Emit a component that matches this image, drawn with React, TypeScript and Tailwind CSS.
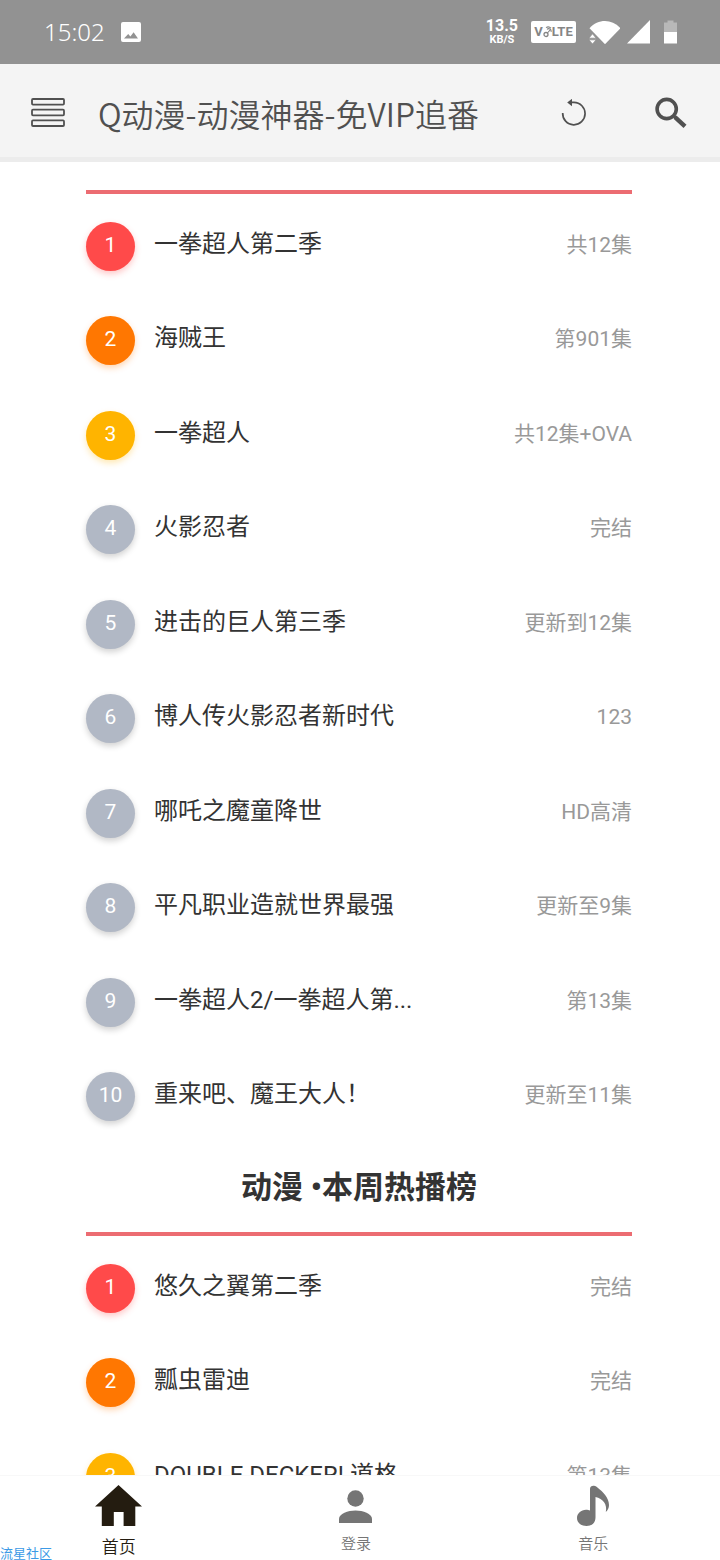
// src/App.tsx
import type { ReactNode } from "react";

interface Show {
  title: string;
  episode: string;
}

const topShows: Show[] = [
  { title: "一拳超人第二季", episode: "共12集" },
  { title: "海贼王", episode: "第901集" },
  { title: "一拳超人", episode: "共12集+OVA" },
  { title: "火影忍者", episode: "完结" },
  { title: "进击的巨人第三季", episode: "更新到12集" },
  { title: "博人传火影忍者新时代", episode: "123" },
  { title: "哪吒之魔童降世", episode: "HD高清" },
  { title: "平凡职业造就世界最强", episode: "更新至9集" },
  { title: "一拳超人2/一拳超人第...", episode: "第13集" },
  { title: "重来吧、魔王大人！", episode: "更新至11集" },
];

const weeklyShows: Show[] = [
  { title: "悠久之翼第二季", episode: "完结" },
  { title: "瓢虫雷迪", episode: "完结" },
  { title: "DOUBLE DECKER! 道格...", episode: "第13集" },
];

// The first three ranks get their own colours, the rest are grey
const badgeColors = [
  "bg-[#ff4a4a] shadow-[0_3px_6px_rgba(255,74,74,0.3)]",
  "bg-[#ff7701] shadow-[0_3px_6px_rgba(255,119,1,0.3)]",
  "bg-[#ffb400] shadow-[0_3px_6px_rgba(255,180,0,0.3)]",
];
const defaultBadge = "bg-[#b1b8c5] shadow-[0_3px_6px_rgba(0,0,0,0.18)]";

const StatusBar = () => (
  <div className="flex h-16 shrink-0 items-center bg-[#929292] pr-[43px] pl-11 text-white">
    <span className="font-['Noto_Sans',sans-serif] text-[24px] leading-8 font-[350]">
      15:02
    </span>
    <svg className="ml-4 h-5 w-5" viewBox="0 0 20 20" fill="currentColor">
      <path
        fillRule="evenodd"
        d="M2 0h16a2 2 0 0 1 2 2v16a2 2 0 0 1-2 2H2a2 2 0 0 1-2-2V2a2 2 0 0 1 2-2zM3 16.5h14l-4.4-6.2-3.2 4.2-2.2-2.6z"
      />
    </svg>

    <div className="ml-auto flex flex-col items-center font-bold">
      <span className="text-[16px] leading-4">13.5</span>
      <span className="text-[11px] leading-3">KB/S</span>
    </div>
    <div className="ml-[13px] flex h-[22px] w-[45px] items-center justify-center rounded-[2px] bg-white text-[13px] font-bold text-[#858585]">
      <span>V</span>
      <svg className="h-[12px] w-[9px]" viewBox="0 0 9 12" fill="none" stroke="currentColor">
        <circle cx="3" cy="8.5" r="2" strokeWidth="1.3" />
        <path d="M4.4 7L7 4.2M4 3.4a2.4 2.4 0 0 1 4 2.4M3 1.6a4 4 0 0 1 5 .6" strokeWidth="1.1" />
      </svg>
      <span>LTE</span>
    </div>
    <svg className="ml-3 h-6 w-8" viewBox="0 0 32 24" fill="currentColor">
      <path d="M1.5 8.2C10-1.5 24-1.5 32.5 8.2L17 24.2z" />
      <path
        d="M.8 18.2l3.7-4.4 3.7 4.4zM.8 19.8l3.7 4.200 3.700-4.200z"
        stroke="#929292"
        strokeWidth="0.8"
      />
    </svg>
    <svg className="ml-[7px] h-6 w-[23px]" viewBox="0 0 23 24" fill="currentColor">
      <path d="M23 0v23.5H0z" />
    </svg>
    <svg className="ml-[14px] h-6 w-[13px]" viewBox="0 0 13 24" fill="currentColor">
      <path d="M0 2.5h3.5V.5h6v2H13V12H0z" opacity="0.35" />
      <path d="M0 12h13v11.5H0z" />
    </svg>
  </div>
);

const Header = () => (
  <header className="flex shrink-0 items-center border-b-[5px] border-[#ececec] bg-[#f4f4f4] pt-1 pr-[33px] pl-[31px] text-[#505050]">
    <button type="button" aria-label="菜单">
      <svg
        className="h-[29px] w-[34px]"
        viewBox="0 0 34 29"
        fill="none"
        stroke="currentColor"
        strokeWidth="1.8"
      >
        <rect x="1" y="1" width="32" height="5.6" rx="1" />
        <rect x="1" y="11.7" width="32" height="5.6" rx="1" />
        <rect x="1" y="22.4" width="32" height="5.6" rx="1" />
      </svg>
    </button>
    <h1 className="ml-[33px] pt-[2px] font-['Noto_Sans_CJK_SC',sans-serif] text-[32px] leading-[87px] font-[350] whitespace-nowrap">
      Q动漫-动漫神器-免VIP追番
    </h1>
    <button type="button" aria-label="刷新" className="ml-auto">
      <svg className="h-7 w-[26px]" viewBox="0 0 26 28" fill="none" stroke="currentColor">
        <path d="M1.7 14A11.2 11.2 0 1 0 12.9 3.4H8" strokeWidth="1.7" />
        <path d="M6.2 3.4L11-.2v7.4z" fill="currentColor" stroke="none" />
      </svg>
    </button>
    <button type="button" aria-label="搜索" className="ml-[68px]">
      <svg className="h-8 w-8" viewBox="0 0 32 32" fill="none" stroke="currentColor">
        <circle cx="11.7" cy="12" r="9.6" strokeWidth="3.6" />
        <path d="M18.8 19l2.4 2.4" strokeWidth="2.6" />
        <path d="M20 20.2l10 9.2" strokeWidth="4.4" />
      </svg>
    </button>
  </header>
);

const RankList = ({ shows }: { shows: Show[] }) => (
  <>
    <div className="mb-7 h-1 bg-[#ec6c72]" />
    <ol>
      {shows.map((show, index) => (
        <li key={show.title} className="flex items-start odd:h-[94px] even:h-[95px]">
          <span
            className={`h-[49px] w-[49px] shrink-0 rounded-full text-center text-[21px] leading-[46px] text-white ${
              badgeColors[index] ?? defaultBadge
            }`}
          >
            {index + 1}
          </span>
          <a
            href="#"
            className="ml-[19px] text-[24px] leading-[44px] whitespace-nowrap text-[#333]"
          >
            {show.title}
          </a>
          <span className="ml-auto text-[21px] leading-[46px] whitespace-nowrap text-[#999]">
            {show.episode}
          </span>
        </li>
      ))}
    </ol>
  </>
);

interface NavItemProps {
  label: string;
  active?: boolean;
  children: ReactNode;
}

const NavItem = ({ label, active = false, children }: NavItemProps) => (
  <a
    href="#"
    className={`flex flex-col items-center pt-2 font-[350] ${
      active ? "text-[#241c10]" : "text-[#757575]"
    }`}
  >
    <span className="flex h-11 items-center">{children}</span>
    <span
      className={
        active
          ? "mt-[7px] text-[17px] leading-[25px]"
          : "mt-[2px] text-[15px] leading-7"
      }
    >
      {label}
    </span>
  </a>
);

const BottomNav = () => (
  <nav className="relative grid shrink-0 grid-cols-3 border-t border-[#f8f8f8] bg-white pr-2">
    <NavItem label="首页" active>
      <svg className="h-[42px] w-[47px]" viewBox="0 0 47 42" fill="currentColor">
        <path d="M23.5 0L47 21.5h-6.7V41H28.6V27h-9.8v14H6.8V21.5H0z" />
      </svg>
    </NavItem>
    <NavItem label="登录">
      <svg className="h-[34px] w-[33px]" viewBox="0 0 33 34" fill="currentColor">
        <circle cx="16.5" cy="9.5" r="8.2" />
        <path d="M0 34v-4c0-5.4 9-8.5 16.5-8.5S33 24.6 33 30v4z" />
      </svg>
    </NavItem>
    <NavItem label="音乐">
      <svg className="h-[42px] w-8" viewBox="0 0 32 42" fill="currentColor">
        <path d="M13 4C13 1.5 15 .5 17 .8c1.5.2 3 1.2 4 2.2 4.5 3.5 11 9.5 11 17 0 2.600-1 5-3.200 7C30.500 19.500 26 13.500 18.500 12v20.500C18.500 37.500 15 41 9.500 41 4 41 0 37.500 0 33s4-8.200 9-8.200c1.500 0 3 .3 4 .7z" />
      </svg>
    </NavItem>
    <span className="absolute bottom-0 left-0 text-[13px] leading-3 text-[#3c9ae6]">
      流星社区
    </span>
  </nav>
);

const App = () => {
  return (
    <div className="flex h-screen flex-col bg-white font-[Roboto,'Noto_Sans_CJK_SC',sans-serif]">
      <StatusBar />
      <Header />
      <main className="min-h-0 flex-1 overflow-hidden pt-7 pr-[88px] pl-[86px]">
        <RankList shows={topShows} />
        <h2 className="pb-[23px] text-center text-[31px] leading-[42px] font-bold text-[#333]">
          动漫 •本周热播榜
        </h2>
        <RankList shows={weeklyShows} />
      </main>
      <BottomNav />
    </div>
  );
};

export default App;
